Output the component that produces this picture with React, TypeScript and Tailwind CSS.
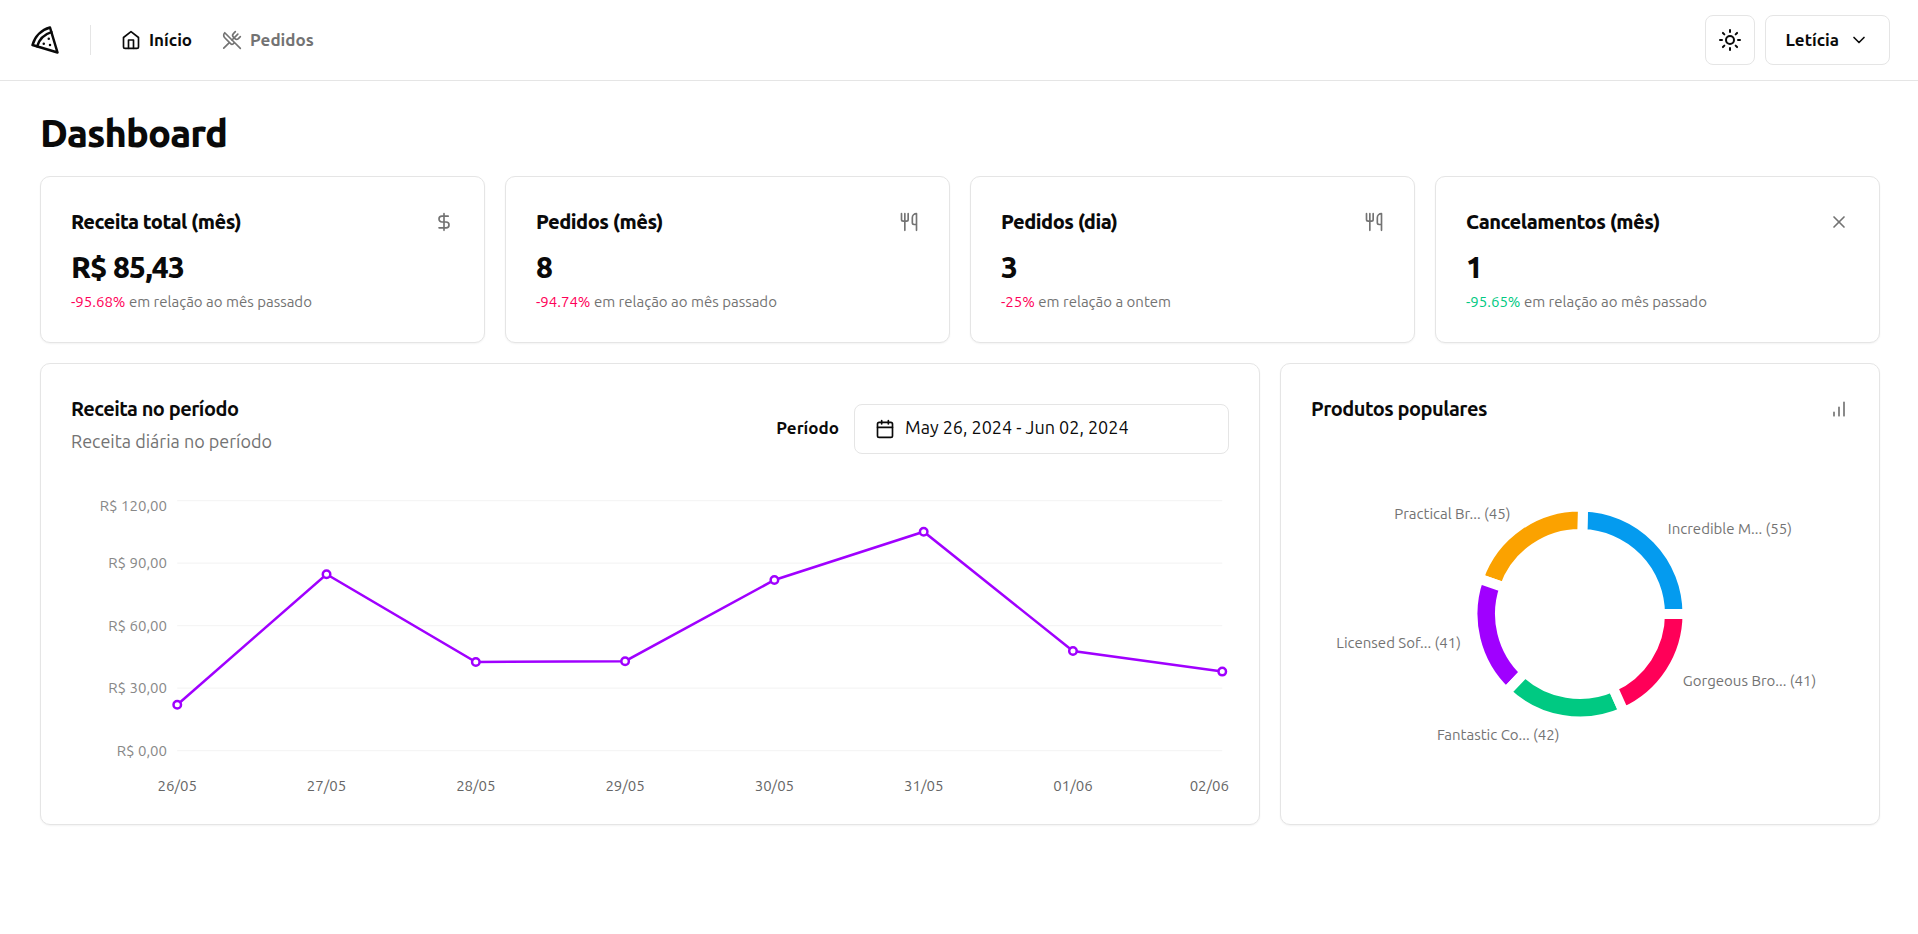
import type { ReactNode } from "react";
import {
  Calendar,
  ChevronDown,
  DollarSign,
  Sun,
  Utensils,
  UtensilsCrossed,
  X,
} from "lucide-react";

function PizzaIcon() {
  return (
    <svg
      className="size-[30px]"
      viewBox="0 0 24 24"
      fill="none"
      stroke="currentColor"
      strokeWidth="2"
      strokeLinecap="round"
      strokeLinejoin="round"
      aria-hidden="true"
    >
      <path d="M15 11h.01M11 15h.01M16 16h.01" />
      <path d="m2 16 20 6-6-20A20 20 0 0 0 2 16" />
      <path d="M5.71 17.11a17.04 17.04 0 0 1 11.4-11.4" />
    </svg>
  );
}

function HomeIcon() {
  return (
    <svg
      className="size-5"
      viewBox="0 0 24 24"
      fill="none"
      stroke="currentColor"
      strokeWidth="2"
      strokeLinecap="round"
      strokeLinejoin="round"
      aria-hidden="true"
    >
      <path d="m3 9 9-7 9 7v11a2 2 0 0 1-2 2H5a2 2 0 0 1-2-2z" />
      <polyline points="9 22 9 12 15 12 15 22" />
    </svg>
  );
}

function BarChartIcon() {
  return (
    <svg
      className="size-5 text-[#737373]"
      viewBox="0 0 24 24"
      fill="none"
      stroke="currentColor"
      strokeWidth="2"
      strokeLinecap="round"
      strokeLinejoin="round"
      aria-hidden="true"
    >
      <path d="M12 20V10M18 20V4M6 20v-4" />
    </svg>
  );
}

function Header() {
  return (
    <header className="border-b border-[#e5e5e5]">
      <div className="flex h-20 items-center gap-[30px] pr-7 pl-[30px]">
        <PizzaIcon />
        <div className="h-[30px] w-px bg-[#e5e5e5]" />
        <nav className="flex items-center gap-[30px] text-[17px] leading-6 font-semibold">
          <a href="#inicio" className="flex items-center gap-2">
            <HomeIcon />
            Início
          </a>
          <a href="#pedidos" className="flex items-center gap-2 text-[#737373]">
            <UtensilsCrossed className="size-5" />
            Pedidos
          </a>
        </nav>
        <div className="ml-auto flex items-center gap-[10px]">
          <button
            type="button"
            aria-label="Alternar tema"
            className="flex size-[50px] items-center justify-center rounded-lg border border-[#e5e5e5]"
          >
            <Sun className="size-6" />
          </button>
          <button
            type="button"
            className="flex h-[50px] items-center gap-[10px] rounded-lg border border-[#e5e5e5] px-5 text-[17px] leading-6 font-semibold"
          >
            Letícia
            <ChevronDown className="size-5" />
          </button>
        </div>
      </div>
    </header>
  );
}

function Card({ className, children }: { className: string; children: ReactNode }) {
  return (
    <section className={`rounded-[10px] border border-[#e5e5e5] bg-white shadow-xs ${className}`}>
      {children}
    </section>
  );
}

type Metric = {
  title: string;
  value: string;
  change: string;
  good?: boolean;
  note: string;
  icon: ReactNode;
};

const metrics: Metric[] = [
  {
    title: "Receita total (mês)",
    value: "R$ 85,43",
    change: "-95.68%",
    note: "em relação ao mês passado",
    icon: <DollarSign className="size-5 text-[#737373]" />,
  },
  {
    title: "Pedidos (mês)",
    value: "8",
    change: "-94.74%",
    note: "em relação ao mês passado",
    icon: <Utensils className="size-5 text-[#737373]" />,
  },
  {
    title: "Pedidos (dia)",
    value: "3",
    change: "-25%",
    note: "em relação a ontem",
    icon: <Utensils className="size-5 text-[#737373]" />,
  },
  {
    title: "Cancelamentos (mês)",
    value: "1",
    change: "-95.65%",
    good: true,
    note: "em relação ao mês passado",
    icon: <X className="size-5 text-[#737373]" />,
  },
];

function MetricCard({ metric }: { metric: Metric }) {
  return (
    <Card className="p-[30px]">
      <div className="flex items-center justify-between pb-[10px]">
        <h2 className="text-[20px] leading-[30px] font-extrabold tracking-tight">{metric.title}</h2>
        {metric.icon}
      </div>
      <p className="text-[30px] leading-10 font-extrabold tracking-tight">{metric.value}</p>
      <p className="pt-[5px] text-[15px] leading-5 text-[#737373]">
        <span className={metric.good ? "text-[#00c982]" : "text-[#ff0058]"}>{metric.change}</span>{" "}
        {metric.note}
      </p>
    </Card>
  );
}

const ticks = [
  { label: "R$ 120,00", y: 6.5, text: 17 },
  { label: "R$ 90,00", y: 69, text: 74 },
  { label: "R$ 60,00", y: 131.5, text: 137 },
  { label: "R$ 30,00", y: 194, text: 199 },
  { label: "R$ 0,00", y: 256.5, text: 262 },
];

const revenue = [
  { date: "26/05", y: 210.7 },
  { date: "27/05", y: 80.2 },
  { date: "28/05", y: 168 },
  { date: "29/05", y: 167.2 },
  { date: "30/05", y: 86 },
  { date: "31/05", y: 37.7 },
  { date: "01/06", y: 157 },
  { date: "02/06", y: 177.6 },
];

const plotLeft = 106.25;
const plotRight = 1151.25;
const pointX = (i: number) => plotLeft + (i * (plotRight - plotLeft)) / (revenue.length - 1);

function RevenueChart() {
  return (
    <svg className="block w-full text-[15px]" viewBox="0 0 1158 300" role="img" aria-label="Receita no período">
      {ticks.map((t) => (
        <g key={t.label}>
          <line x1={plotLeft} x2={plotRight} y1={t.y} y2={t.y} stroke="#f5f5f5" strokeWidth="1.25" />
          <text x="96" y={t.text} textAnchor="end" fill="#888888">
            {t.label}
          </text>
        </g>
      ))}
      {revenue.map((r, i) => {
        const last = i === revenue.length - 1;
        return (
          <text
            key={r.date}
            x={last ? 1158 : pointX(i)}
            y="297"
            textAnchor={last ? "end" : "middle"}
            fill="#666666"
          >
            {r.date}
          </text>
        );
      })}
      <polyline
        points={revenue.map((r, i) => `${pointX(i)},${r.y}`).join(" ")}
        fill="none"
        stroke="#a000ff"
        strokeWidth="2.5"
      />
      {revenue.map((r, i) => (
        <circle key={r.date} cx={pointX(i)} cy={r.y} r="3.75" fill="#fff" stroke="#a000ff" strokeWidth="2.5" />
      ))}
    </svg>
  );
}

const products = [
  { name: "Incredible M...", amount: 55, color: "#049bef" },
  { name: "Practical Br...", amount: 45, color: "#fba200" },
  { name: "Licensed Sof...", amount: 41, color: "#a000ff" },
  { name: "Fantastic Co...", amount: 42, color: "#00c982" },
  { name: "Gorgeous Bro...", amount: 41, color: "#ff0058" },
];

const total = products.reduce((sum, p) => sum + p.amount, 0);

function polar(radius: number, angle: number) {
  return { x: 269 + radius * Math.cos(angle), y: 150 - radius * Math.sin(angle) };
}

function ProductsChart() {
  let start = 0;
  const slices = products.map((p) => {
    const end = start + (p.amount / total) * Math.PI * 2;
    const a = polar(107.5, start);
    const b = polar(107.5, end);
    const c = polar(80, end);
    const d = polar(80, start);
    const label = polar(122.5, (start + end) / 2);
    const path = `M${a.x} ${a.y}A107.5 107.5 0 0 0 ${b.x} ${b.y}L${c.x} ${c.y}A80 80 0 0 1 ${d.x} ${d.y}Z`;
    start = end;
    return { ...p, path, label };
  });
  return (
    <svg className="block w-full text-[15px]" viewBox="0 0 538 300" role="img" aria-label="Produtos populares">
      {slices.map((s) => (
        <path key={s.name} d={s.path} fill={s.color} stroke="#fff" strokeWidth="10" />
      ))}
      {slices.map((s) => (
        <text
          key={s.name}
          x={s.label.x}
          y={s.label.y}
          textAnchor={s.label.x > 269 ? "start" : "end"}
          dominantBaseline="central"
          fill="#737373"
        >
          {s.name} ({s.amount})
        </text>
      ))}
    </svg>
  );
}

export default function App() {
  return (
    <div className="min-h-screen bg-white font-[Ubuntu,'Noto_Sans',sans-serif] text-[#0a0a0a]">
      <Header />
      <main className="flex flex-col gap-5 pt-[30px] pr-[38px] pb-10 pl-10">
        <h1 className="text-[38px] leading-[45px] font-extrabold tracking-tight">Dashboard</h1>
        <div className="grid grid-cols-4 gap-5">
          {metrics.map((m) => (
            <MetricCard key={m.title} metric={m} />
          ))}
        </div>
        <div className="grid grid-cols-9 gap-5">
          <Card className="col-span-6 p-[30px]">
            <div className="flex items-end justify-between pb-10">
              <div className="flex flex-col gap-[5px]">
                <h2 className="text-[20px] leading-[30px] font-semibold tracking-tight">Receita no período</h2>
                <p className="text-[18px] leading-[25px] text-[#737373]">Receita diária no período</p>
              </div>
              <div className="flex items-center gap-[15px] text-[17px] leading-[25px]">
                <label htmlFor="periodo" className="pb-[3px] font-semibold">
                  Período
                </label>
                <button
                  id="periodo"
                  type="button"
                  className="flex h-[50px] w-[375px] items-center gap-[10px] rounded-lg border border-[#e5e5e5] px-5 text-left"
                >
                  <Calendar className="size-5" />
                  <span className="pb-[3px] text-[18px]">May 26, 2024 - Jun 02, 2024</span>
                </button>
              </div>
            </div>
            <RevenueChart />
          </Card>
          <Card className="col-span-3 p-[30px]">
            <div className="flex items-center justify-between pb-10">
              <h2 className="text-[20px] leading-[30px] font-semibold tracking-tight">Produtos populares</h2>
              <BarChartIcon />
            </div>
            <ProductsChart />
          </Card>
        </div>
      </main>
    </div>
  );
}
